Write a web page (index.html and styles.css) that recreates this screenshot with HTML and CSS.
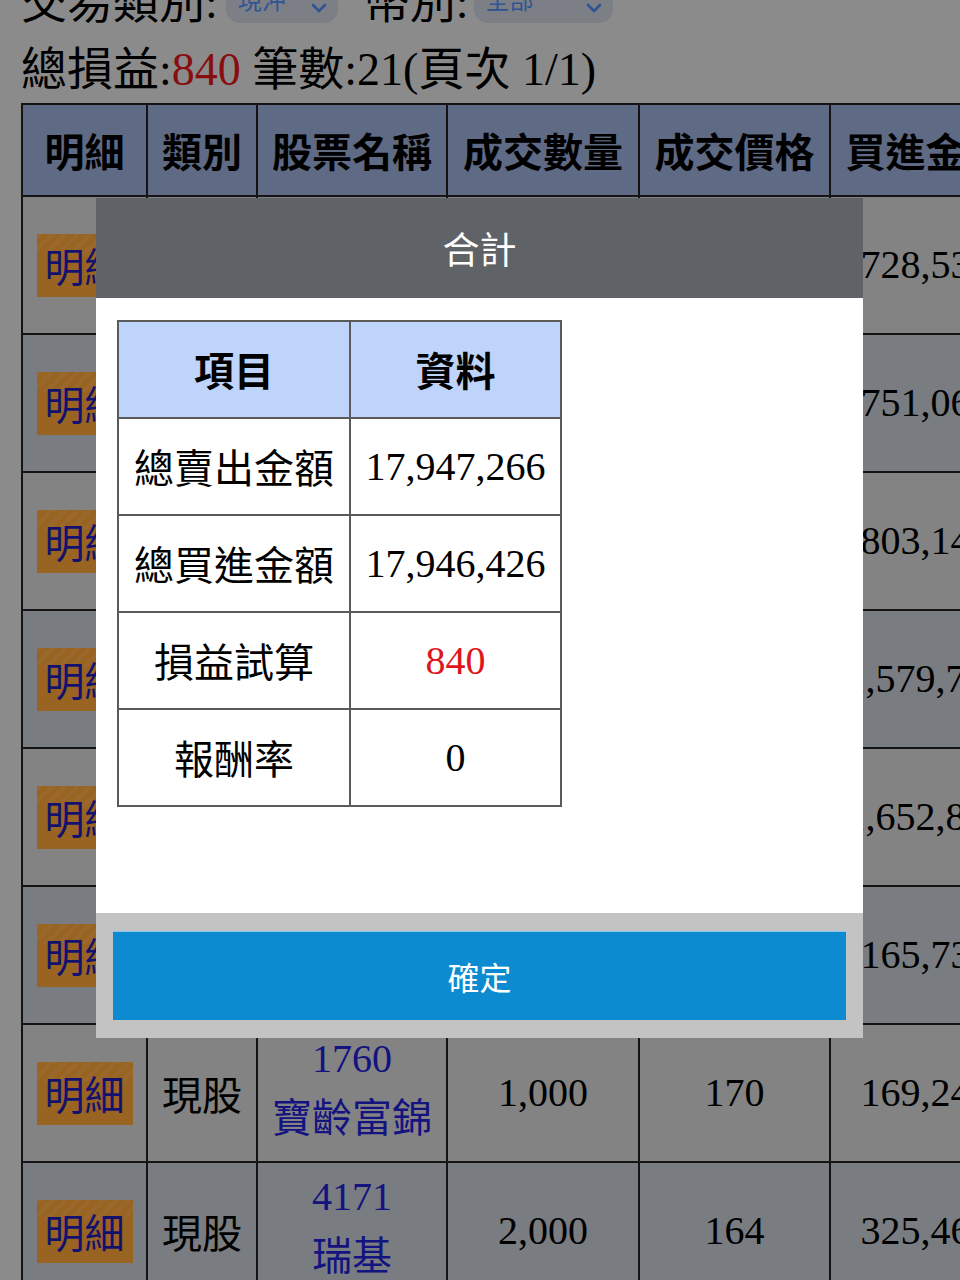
FILE: index.html
```html
<!DOCTYPE html>
<html lang="zh-Hant">
<head>
<meta charset="utf-8">
<title>交易明細</title>
<link rel="stylesheet" href="styles.css">
</head>
<body>
<div class="page">
  <div class="filters">
    <span class="label">交易類別:</span>
    <span class="select s1"><span>現沖</span><svg class="chev" viewBox="0 0 20 40" width="20" height="40"><path d="M4 13 L10 7 L16 13" /><path d="M4 27 L10 33 L16 27" /></svg></span>
    <span class="label">幣別:</span>
    <span class="select s2"><span>全部</span><svg class="chev" viewBox="0 0 20 40" width="20" height="40"><path d="M4 13 L10 7 L16 13" /><path d="M4 27 L10 33 L16 27" /></svg></span>
  </div>
  <div class="summary">總損益:<span class="red">840</span> 筆數:21(頁次 1/1)</div>
  <table class="trades">
    <colgroup>
      <col class="c1"><col class="c2"><col class="c3"><col class="c4"><col class="c5"><col class="c6"><col class="c7">
    </colgroup>
    <thead>
      <tr><th>明細</th><th>類別</th><th>股票名稱</th><th>成交數量</th><th>成交價格</th><th>買進金額</th><th>賣出金額</th></tr>
    </thead>
    <tbody>
      <tr><td><span class="detail">明細</span></td><td class="cjk">現股</td><td class="stock"><span class="code">2330</span><span class="name">台積電</span></td><td>1,000</td><td>728</td><td>728,530</td><td>729,160</td></tr>
      <tr><td><span class="detail">明細</span></td><td class="cjk">現股</td><td class="stock"><span class="code">2454</span><span class="name">聯發科</span></td><td>1,000</td><td>751</td><td>751,060</td><td>751,920</td></tr>
      <tr><td><span class="detail">明細</span></td><td class="cjk">現股</td><td class="stock"><span class="code">3008</span><span class="name">大立光</span></td><td>1,000</td><td>803</td><td>803,140</td><td>803,450</td></tr>
      <tr><td><span class="detail">明細</span></td><td class="cjk">現股</td><td class="stock"><span class="code">2382</span><span class="name">廣達</span></td><td>5,000</td><td>315</td><td>1,579,700</td><td>1,580,350</td></tr>
      <tr><td><span class="detail">明細</span></td><td class="cjk">現股</td><td class="stock"><span class="code">3231</span><span class="name">緯創</span></td><td>15,000</td><td>110</td><td>1,652,800</td><td>1,653,210</td></tr>
      <tr><td><span class="detail">明細</span></td><td class="cjk">現股</td><td class="stock"><span class="code">2603</span><span class="name">長榮</span></td><td>1,000</td><td>165</td><td>165,730</td><td>165,980</td></tr>
      <tr><td><span class="detail">明細</span></td><td class="cjk">現股</td><td class="stock"><span class="code">1760</span><span class="name">寶齡富錦</span></td><td>1,000</td><td>170</td><td>169,240</td><td>169,490</td></tr>
      <tr><td><span class="detail">明細</span></td><td class="cjk">現股</td><td class="stock"><span class="code">4171</span><span class="name">瑞基</span></td><td>2,000</td><td>164</td><td>325,460</td><td>325,780</td></tr>
    </tbody>
  </table>
</div>

<div class="overlay"></div>

<div class="modal">
  <div class="modal-head">合計</div>
  <div class="modal-body">
    <table class="sum">
      <colgroup><col class="k"><col class="v"></colgroup>
      <thead><tr><th>項目</th><th>資料</th></tr></thead>
      <tbody>
        <tr><td>總賣出金額</td><td class="num">17,947,266</td></tr>
        <tr><td>總買進金額</td><td class="num">17,946,426</td></tr>
        <tr><td>損益試算</td><td class="num neg">840</td></tr>
        <tr><td>報酬率</td><td class="num">0</td></tr>
      </tbody>
    </table>
  </div>
  <div class="modal-foot"><button class="ok" type="button">確定</button></div>
</div>
</body>
</html>
```

FILE: styles.css
```css
html, body {
  margin: 0;
  padding: 0;
  overflow: hidden;
}
body {
  width: 960px;
  height: 1280px;
  background: #e8e8e8;
  color: #000;
  font-family: "Liberation Serif", "Noto Sans CJK TC", serif;
}

.page {
  padding-top: 1px;
  margin-top: -35px;
  padding-left: 21px;
}

.filters {
  display: flex;
  align-items: center;
  height: 64px;
  font-size: 46px;
  white-space: nowrap;
}
.select {
  display: inline-flex;
  align-items: center;
  justify-content: space-between;
  box-sizing: border-box;
  height: 50px;
  padding: 0 9px 0 12px;
  margin-left: 8px;
  border-radius: 14px;
  background: #cfd4de;
  color: #4d8ef5;
  font-family: "Noto Sans CJK TC", sans-serif;
  font-size: 24px;
}
.s1 { width: 112px; margin-right: 26px; }
.s2 { width: 139px; margin-left: 5px; }
.chev path {
  fill: none;
  stroke: #4d8ef5;
  stroke-width: 2.6;
  stroke-linecap: round;
  stroke-linejoin: round;
}

.summary {
  margin-top: 10px;
  height: 60px;
  line-height: 60px;
  font-size: 46px;
  white-space: nowrap;
}
.red { color: #e01818; }

.trades {
  margin-top: 3px;
  border-collapse: collapse;
  table-layout: fixed;
  width: 1192px;
  font-size: 40px;
  border: 2px solid #222;
}
.trades .c1 { width: 125px; }
.trades .c2 { width: 110px; }
.trades .c3 { width: 190px; }
.trades .c4 { width: 192px; }
.trades .c5 { width: 191px; }
.trades .c6 { width: 191px; }
.trades .c7 { width: 191px; }
.trades th,
.trades td {
  border: 2px solid #222;
  padding: 0;
  height: 138px;
  box-sizing: border-box;
  line-height: 56px;
  text-align: center;
  white-space: nowrap;
  overflow: hidden;
}
.trades th {
  height: 92px;
  background: #9eb1de;
  font-family: "Noto Sans CJK TC", sans-serif;
  font-weight: 700;
}
.trades tbody tr:nth-child(odd) { background: #dadada; }
.trades tbody tr:nth-child(even) { background: #cacfd5; }
.cjk { font-family: "Noto Sans CJK TC", sans-serif; }
.detail {
  display: inline-block;
  vertical-align: middle;
  padding: 7px 8px;
  line-height: 49px;
  color: #1f1fb8;
  font-family: "Noto Sans CJK TC", sans-serif;
  background:
    repeating-linear-gradient(135deg, rgba(255, 255, 255, 0.09) 0 4px, rgba(255, 255, 255, 0) 4px 9px) top left / 100% 20px no-repeat,
    #ffa538;
}
.stock { color: #2222d6; }
.stock .code,
.stock .name {
  display: block;
  height: 56px;
  line-height: 56px;
}
.stock .code { margin-top: -6px; }
.stock .name {
  margin-bottom: 6px;
  font-family: "Noto Sans CJK TC", sans-serif;
}

.overlay {
  position: fixed;
  inset: 0;
  background: rgba(0, 0, 0, 0.4);
}

.modal {
  position: fixed;
  top: 198px;
  left: 96px;
  width: 767px;
  font-family: "Noto Sans CJK TC", sans-serif;
}
.modal-head {
  display: flex;
  align-items: center;
  justify-content: center;
  height: 100px;
  background: #5f6367;
  color: #fff;
  font-size: 37px;
}
.modal-body {
  box-sizing: border-box;
  height: 615px;
  padding: 22px 21px;
  background: #fff;
}
.sum {
  border-collapse: collapse;
  table-layout: fixed;
  width: 445px;
  font-size: 40px;
  border: 2px solid #5a5a5a;
}
.sum .k { width: 232px; }
.sum .v { width: 211px; }
.sum th,
.sum td {
  border: 2px solid #5a5a5a;
  padding: 19px 0;
  line-height: 57px;
  text-align: center;
  white-space: nowrap;
}
.sum th {
  background: #bfd4fb;
  font-weight: 700;
}
.sum .num { font-family: "Liberation Serif", serif; }
.sum .neg { color: #e0151b; }

.modal-foot {
  padding: 18px 17px;
  background: #c3c3c3;
}
.ok {
  display: block;
  width: 100%;
  height: 89px;
  margin: 0;
  border: 0;
  border-top: 1px solid #86c7ee;
  background: #0c8bd0;
  color: #fff;
  font-family: "Noto Sans CJK TC", sans-serif;
  font-size: 32px;
}
```
